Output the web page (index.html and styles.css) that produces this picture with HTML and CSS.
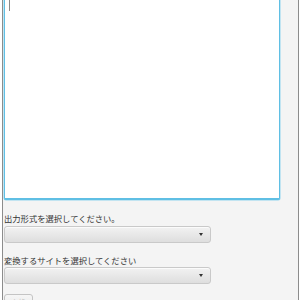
FILE: index.html
```html
<!DOCTYPE html>
<html lang="ja">
<head>
    <meta charset="UTF-8">
    <meta name="viewport" content="width=device-width, initial-scale=1.0">
    <title>変換</title>
    <link rel="stylesheet" href="styles.css">
</head>
<body>
    <div class="window">
        <div class="editor">
            <textarea id="source" class="source-input"></textarea>
            <span class="text-cursor"></span>
        </div>
        <div class="field">
            <label for="format">出力形式を選択してください。</label>
            <div class="combo" id="format">
                <span class="arrow"></span>
            </div>
        </div>
        <div class="field">
            <label for="site">変換するサイトを選択してください</label>
            <div class="combo" id="site">
                <span class="arrow"></span>
            </div>
        </div>
        <div class="buttons">
            <button id="convertBtn">変換</button>
        </div>
    </div>
</body>
</html>
```

FILE: styles.css
```css
html, body {
    margin: 0;
    padding: 0;
    background-color: #fff;
    overflow: hidden;
    height: 300px;
}

body {
    font-family: "Noto Sans CJK JP", "Noto Sans", sans-serif;
    color: #222;
}

.window {
    margin-left: 2px;
    width: 294px;
    height: 300px;
    overflow: hidden;
    border-left: 1px solid #8c8c8c;
    border-right: 1px solid #8c8c8c;
    background-color: #f4f4f4;
    padding-left: 1px;
}

.editor {
    position: relative;
    width: 276px;
    height: 212px;
    margin-top: -12px;
}

.source-input {
    display: block;
    width: 100%;
    height: 100%;
    box-sizing: border-box;
    margin: 0;
    resize: none;
    background-color: #fff;
    border: 1px solid #5fbfe4;
    border-bottom-width: 2px;
    border-radius: 2px;
    box-shadow: 0 0 0 0.5px #8fd3ee;
    outline: none;
}

.text-cursor {
    position: absolute;
    left: 5px;
    top: 12px;
    width: 1px;
    height: 11px;
    background-color: #8a8a8a;
}

.field {
    margin-top: 12px;
}

.field label {
    display: block;
    font-size: 8.3px;
    line-height: 12px;
    margin-bottom: 2px;
    color: #333;
}

.field + .field {
    margin-top: 11px;
}

.field + .field label {
    margin-bottom: 1px;
}

.combo {
    position: relative;
    width: 207px;
    height: 17px;
    box-sizing: border-box;
    border: 1px solid #c9c9c9;
    border-radius: 3px;
    background: linear-gradient(#f2f2f2, #dedede);
    box-shadow: inset 0 1px 0 #fbfbfb;
}

.arrow {
    position: absolute;
    right: 7px;
    top: 6px;
    width: 0;
    height: 0;
    border-left: 2.5px solid transparent;
    border-right: 2.5px solid transparent;
    border-top: 3px solid #333;
}

.buttons {
    margin-top: 10px;
}

.buttons button {
    display: block;
    width: 29px;
    height: 18px;
    padding: 0;
    font-family: inherit;
    font-size: 8px;
    line-height: 16px;
    color: #c4c4c4;
    border: 1px solid #c4c4c4;
    border-radius: 3px;
    background: linear-gradient(#f6f6f6, #e6e6e6);
}
```
